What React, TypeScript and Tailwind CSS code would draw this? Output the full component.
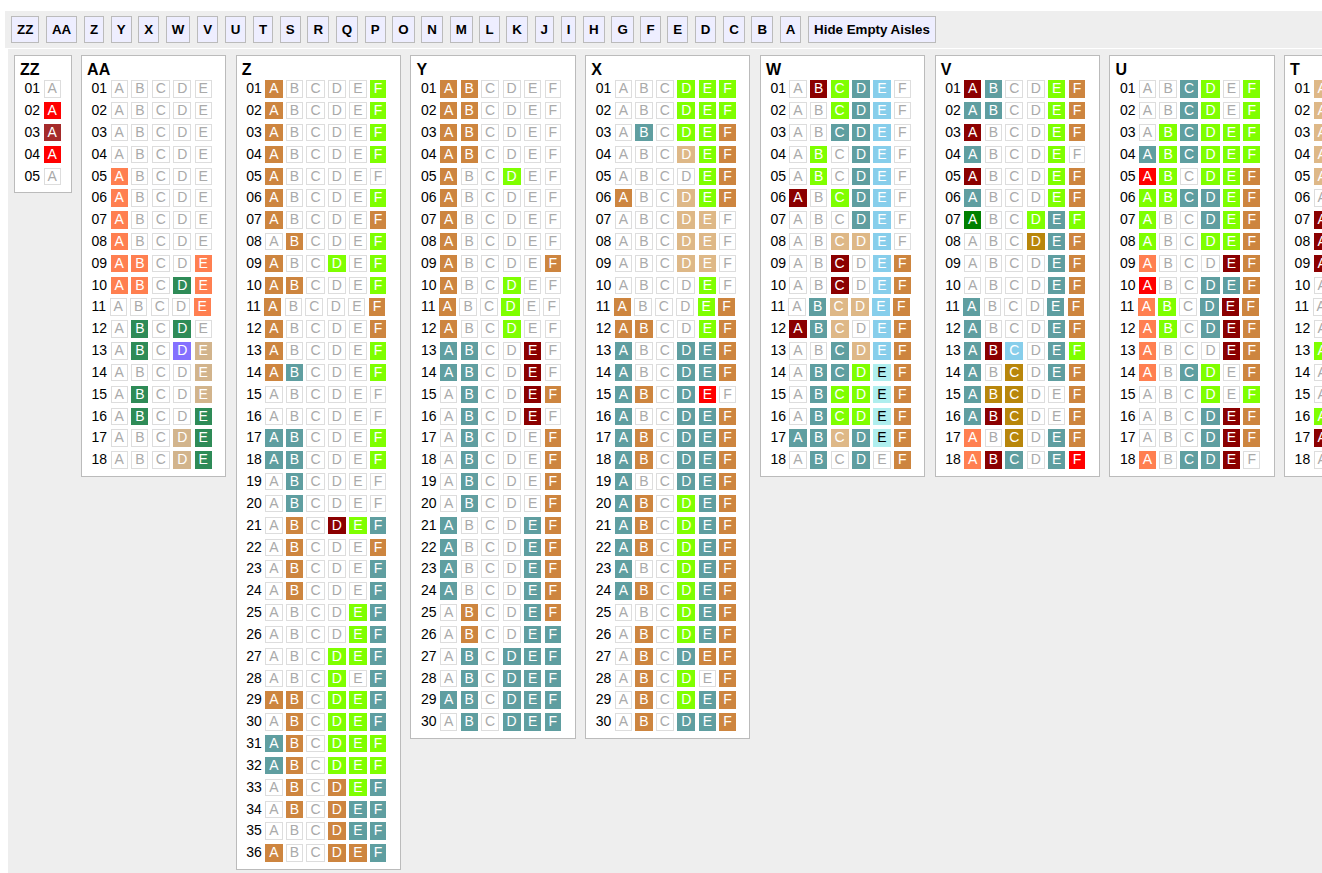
const COLORS: Record<string, string> = {
  p: "bg-[#cd853f] border-[#cd853f] text-white",
  t: "bg-[#5f9ea0] border-[#5f9ea0] text-white",
  g: "bg-[#7fff00] border-[#7fff00] text-white",
  m: "bg-[#8b0000] border-[#8b0000] text-white",
  r: "bg-[#ff0000] border-[#ff0000] text-white",
  b: "bg-[#a52a2a] border-[#a52a2a] text-white",
  c: "bg-[#ff7f50] border-[#ff7f50] text-white",
  s: "bg-[#2e8b57] border-[#2e8b57] text-white",
  n: "bg-[#d2b48c] border-[#d2b48c] text-white",
  w: "bg-[#deb887] border-[#deb887] text-white",
  y: "bg-[#87ceeb] border-[#87ceeb] text-white",
  q: "bg-[#afeeee] border-[#afeeee] text-black",
  o: "bg-[#b8860b] border-[#b8860b] text-white",
  h: "bg-[#008000] border-[#008000] text-white",
  l: "bg-[#8470ff] border-[#8470ff] text-white",
  ".": "bg-white border-[#dddddd] text-[#aaaaaa]",
};

const BUTTONS = ["ZZ","AA","Z","Y","X","W","V","U","T","S","R","Q","P","O","N","M","L","K","J","I","H","G","F","E","D","C","B","A","Hide Empty Aisles"];

const AISLES: { name: string; width: string; rows: string[] }[] = [
  { name: "ZZ", width: "w-[57.6px]", rows: [".", "r", "b", "r", "."] },
  { name: "AA", width: "w-[145.2px]", rows: [
    ".....",".....",".....",".....","c....","c....","c....","c....","cc..c","cc.sc","....c",".s.s.",".s.ln","....n",".s..n",".s..s","...ns","...ns",
  ] },
  { name: "Z", width: "w-[165.3px]", rows: [
    "p....g","p....g","p....g","p....g","p.....","p....g","p....p",".p...g","p..g.g","pp...g","p....p","p....p","p....g","pt...g","......","......","tt...g","tt...g",
    ".t....",".t....",".p.mgt",".p...p",".p...t",".p...t","....gt","....gt","...ggt","...g.t","pp.ggt",".p.ggt","tp.ggg","tp.ggg",".p.pgt",".p.ptt","...ptt","p..ppt",
  ] },
  { name: "Y", width: "w-[165.3px]", rows: [
    "pp....","pp....","pp....","pp....","p..g..","p.....","p.....","p.....","p....p","p..g..","p..g..","p..g..","tt..m.","tt..m.",".t..mp",".t..m.",".t...p",".t...p",
    ".t...p",".t...p","t...tp","t...tp","t...tp","t...tp",".p..tp",".p..tt",".t.ttt",".t.ttt","tt.ttt",".t.ttt",
  ] },
  { name: "X", width: "w-[165.3px]", rows: [
    "...ggg","...ggg",".t.ggp","...wgp","....gp","p..wgp","...ww.","...ww.","...ww.","....g.","p...gp","pp..gp","t..ttp","t..ttp","tp.tr.","t..ttp","tp.ttp","tp.ttp",
    "t..ttp","tp.gtp","tp.gtp","tp.gtp","t..gtp","tp.gtp","...gtp",".p.gtp",".p.tpp",".p.g.p",".p.gtp",".p.ttp",
  ] },
  { name: "W", width: "w-[165.3px]", rows: [
    ".mgty.","..gty.","..tty.",".g.ty.",".g.ty.","m.gty.","...ty.","..wwy.","..m.yp","..m.yp",".twwyp","mtw.yp","..twyp",".ttgqp",".tggqp",".tggqp","ttwtqp",".t.t.p",
  ] },
  { name: "V", width: "w-[165.3px]", rows: [
    "mt..gp","tt..gp","m...gp","t...g.","m...gp","t...gp","h..gtg","...otp","....tp","....tp","t...tp","t...tp","tmy.tg","t.o.tp","too..p","tmo..p","c.o.tp","cmt.tr",
  ] },
  { name: "U", width: "w-[165.3px]", rows: [
    "..tg.g","..tg.g",".gtggg","tgtggg","rg.ggp","ggttgp","g..tgp","g..ggp","c...mp","r..ttp","cg.tmp","cg.tmp","c...mp","c.tg.p","...g.g","...tmp","...tmp","c.ttm.",
  ] },
  { name: "T", width: "w-[165.3px]", rows: [
    "w.....","w.....","w.....","w.....","w.....","......","m.....","m.....","m.....","......","......","......","g.....","......","......","g.....","m.....","......",
  ] },
];

const LETTERS = "ABCDEF";

function Seat({ letter, code }: { letter: string; code: string }) {
  return (
    <span className={`block h-[17.4px] border px-[3px] leading-[15.4px] ${COLORS[code]}`}>
      {letter}
    </span>
  );
}

function Aisle({ name, width, rows }: { name: string; width: string; rows: string[] }) {
  return (
    <section className={`shrink-0 border border-[#bbbbbb] bg-white pt-[5px] pr-[5px] pb-[3px] pl-[5px] ${width}`}>
      <h2 className="h-[19.2px] text-[16px] font-bold leading-[18px] text-black">{name}</h2>
      {rows.map((row, i) => (
        <div key={i} className="flex h-[21.83px] items-start gap-[3.28px] whitespace-nowrap pl-[4.5px] text-[14px]">
          <span className="mr-[0.11px] pt-[1px] leading-[15.4px] text-black">{String(i + 1).padStart(2, "0")}</span>
          {row.split("").map((code, j) => (
            <Seat key={j} letter={LETTERS[j]} code={code} />
          ))}
        </div>
      ))}
    </section>
  );
}

export default function App() {
  return (
    <div className="h-[873px] w-full overflow-hidden bg-white pt-[11px] [font-family:'Liberation_Sans',Arial,sans-serif]">
      <nav className="ml-[5px] flex h-[37px] items-start gap-[6.68px] bg-[#eeeeee] pt-[5px] pl-[6px]">
        {BUTTONS.map((b) => (
          <button
            key={b}
            className="h-[27px] shrink-0 border border-[#bbbbbb] bg-[#eeeeff] px-[5px] text-[13.333px] font-bold text-black"
          >
            {b}
          </button>
        ))}
      </nav>
      <main className="mt-[1px] ml-[8px] flex h-[824px] items-start gap-[9.45px] bg-[#eeeeee] pt-[6px] pl-[6.05px]">
        {AISLES.map((a) => (
          <Aisle key={a.name} {...a} />
        ))}
      </main>
    </div>
  );
}
